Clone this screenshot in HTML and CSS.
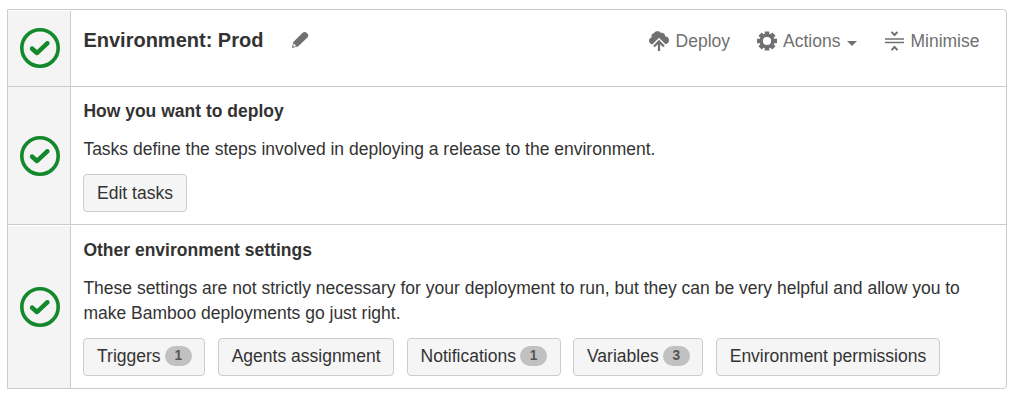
FILE: index.html
```html
<!DOCTYPE html>
<html lang="en">
<head>
<meta charset="utf-8">
<title>Environment: Prod</title>
<link rel="stylesheet" href="styles.css">
</head>
<body>
<svg class="defs" width="0" height="0" aria-hidden="true">
  <symbol id="tick" viewBox="0 0 40 40">
    <circle cx="20" cy="20" r="18.2" fill="none" stroke="currentColor" stroke-width="3.6"/>
    <path d="M11.300 20l5.700 5L28 14.700" fill="none" stroke="currentColor" stroke-width="4.400" stroke-linejoin="round"/>
    <path d="M11.800 20.300l5.200 4.600L27.700 15" fill="none" stroke="currentColor" stroke-width="3.800" stroke-linejoin="round" stroke-linecap="round"/>
  </symbol>
</svg>
<main class="environment">
  <section class="row row-header">
    <div class="status"><svg class="status-icon"><use href="#tick"/></svg></div>
    <div class="header">
      <h1 class="title">Environment: Prod</h1>
      <svg class="edit-icon" width="18" height="18" viewBox="0 0 18 18"><path d="M1 16.800l1.300-5.900L11.700 1.700c1.200-1.100 2.600-1.100 3.900.1l.7.7c1.300 1.300 1.300 2.700.1 3.900L7 15.600z" fill="#707070"/><path d="M2 15.700l.7-3.200 2.600 2.600z" fill="#fff"/><path d="M1 16.800l.4-2 1.600 1.500z" fill="#707070"/></svg>
      <nav class="toolbar">
        <a class="action action-deploy">
          <svg width="20" height="20" viewBox="0 0 20 20"><path d="M4.200 13.400C1.900 13.300 0 11.900 0 9.700 0 7.900 1.200 6.700 2.800 6.300 2.200 5.700 2.400 4.300 3 3.300c.4-.7 1-.9 1.600-.8C5.500.9 7 .3 8.500.3c1.300 0 2.400.5 3.200 1.400 2.500-.4 4.500 1 4.500 3.600 2.200.2 3.800 1.800 3.800 4.100 0 2-1.500 3.600-4.200 3.900L10 12z" fill="currentColor"/><path d="M3.500 14.700L10 8.200l6.500 6.500L10 20z" fill="#fff" stroke="#fff" stroke-width="2"/><path d="M10 20v-9M5 15.500L10 10.500l5 5" fill="none" stroke="currentColor" stroke-width="2.300"/></svg>
          <span>Deploy</span>
        </a>
        <a class="action action-menu">
          <svg width="20" height="20" viewBox="0 0 20 20"><g stroke="currentColor" stroke-width="4.600"><path d="M10 .4v4M10 15.600v4M0 10h4.400M15.600 10H20M3.100 3.100L6 6M14 14l2.900 2.900M16.900 3.100L14 6M6 14l-2.900 2.900"/></g><circle cx="10" cy="10" r="5.800" fill="none" stroke="currentColor" stroke-width="3.400"/></svg>
          <span>Actions</span>
          <svg class="caret" width="10" height="5" viewBox="0 0 10 5"><path d="M0 0h10L5 5z" fill="currentColor"/></svg>
        </a>
        <a class="action action-minimise">
          <svg width="19" height="20" viewBox="0 0 19 20"><path d="M0 8h19M0 11.500h19" stroke="currentColor" stroke-width="1.400"/><path d="M6.500.900L9.500 4l3-3.100M6.500 19.100L9.500 16l3 3.100" fill="none" stroke="currentColor" stroke-width="2"/></svg>
          <span>Minimise</span>
        </a>
      </nav>
    </div>
  </section>
  <section class="row row-tasks">
    <div class="status"><svg class="status-icon"><use href="#tick"/></svg></div>
    <div class="content">
      <h2 class="heading">How you want to deploy</h2>
      <p class="text">Tasks define the steps involved in deploying a release to the environment.</p>
      <div class="buttons"><button class="button">Edit tasks</button></div>
    </div>
  </section>
  <section class="row row-settings">
    <div class="status"><svg class="status-icon"><use href="#tick"/></svg></div>
    <div class="content">
      <h2 class="heading">Other environment settings</h2>
      <p class="text">These settings are not strictly necessary for your deployment to run, but they can be very helpful and allow you to make Bamboo deployments go just right.</p>
      <div class="buttons">
        <button class="button">Triggers<span class="badge">1</span></button>
        <button class="button">Agents assignment</button>
        <button class="button">Notifications<span class="badge">1</span></button>
        <button class="button">Variables<span class="badge">3</span></button>
        <button class="button">Environment permissions</button>
      </div>
    </div>
  </section>
</main>
</body>
</html>
```
FILE: styles.css
```css
* { box-sizing: border-box; }
body {
  margin: 0;
  padding: 9px 9px 0 7px;
  background: #fff;
  color: #333;
  font: 17.5px/25px "Liberation Sans", Arial, sans-serif;
}
.defs { position: absolute; }
.environment {
  height: 380px;
  border: 1px solid #ccc;
  border-radius: 0 4px 4px 0;
  display: grid;
  grid-template-rows: 76px 138px 164px;
}
.row { display: grid; grid-template-columns: 63px 1fr; }
.row + .row { border-top: 1px solid #ccc; }
.row-header, .row-settings { padding-top: 1px; }
.status {
  display: flex;
  align-items: center;
  justify-content: center;
  padding-left: 1px;
  background: #f4f4f4;
  border-right: 1px solid #ccc;
  color: #14892c;
}
.row-header .status { padding-bottom: 2px; }
.status-icon { width: 40px; height: 40px; }
.header {
  display: flex;
  align-items: flex-start;
  padding: 17px 26.5px 0 12.4px;
}
.title { margin: 0; font-size: 20px; line-height: 25px; white-space: nowrap; }
.edit-icon { margin: 3px 0 0 28px; }
.toolbar { display: flex; margin-left: auto; color: #707070; }
.action { display: flex; align-items: center; height: 26px; white-space: nowrap; }
.action > svg { margin-right: 6px; }
.action-deploy > svg { margin-right: 6.7px; }
.action-menu { margin-left: 27px; }
.action-menu > .caret { margin: 4px 0 0 7px; }
.action-minimise { margin-left: 28px; }
.content { padding: 12px 40px 0 12.4px; }
.heading { margin: 0; font-size: 17.5px; line-height: 25px; }
.text { margin: 13px 0 0; }
.buttons { display: flex; gap: 12.7px; margin-top: 12px; }
.button {
  display: flex;
  align-items: center;
  height: 38px;
  padding: 0 12.7px;
  border: 1px solid #ccc;
  border-radius: 4px;
  background: #f5f5f5;
  color: #333;
  font: inherit;
  white-space: nowrap;
}
.row-settings .button { padding-bottom: 2px; }
.badge {
  min-width: 26.5px;
  height: 20px;
  margin-left: 4.5px;
  border-radius: 10px;
  background: #c1c1c1;
  color: #555;
  font-size: 13.75px;
  font-weight: bold;
  line-height: 20px;
  text-align: center;
}
```
